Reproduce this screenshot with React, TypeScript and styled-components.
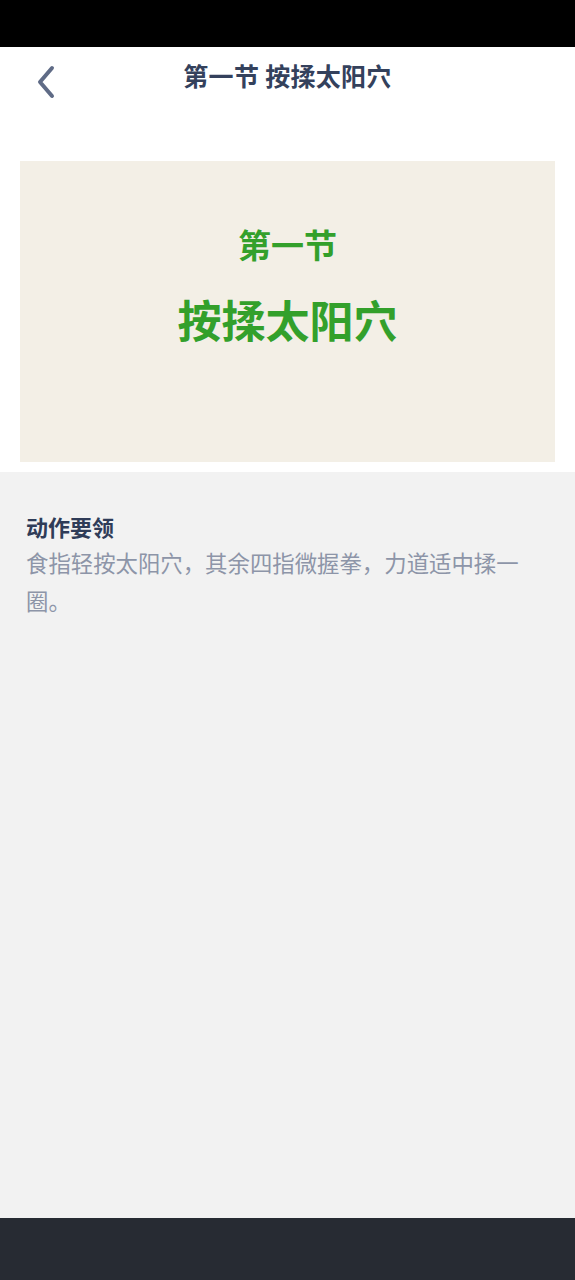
import React from "react";
import styled, { createGlobalStyle } from "styled-components";

const GlobalStyle = createGlobalStyle`
  html, body {
    margin: 0;
    padding: 0;
    background: #f2f2f2;
  }
  body {
    font-family: "Noto Sans CJK SC", "Noto Sans", sans-serif;
  }
  * {
    box-sizing: border-box;
  }
`;

const Page = styled.div`
  width: 575px;
  height: 1280px;
  display: flex;
  flex-direction: column;
  background: #f2f2f2;
  overflow: hidden;
`;

const StatusBar = styled.div`
  height: 47px;
  flex: none;
  background: #000;
`;

const Header = styled.div`
  flex: none;
  background: #fff;
  padding-bottom: 10px;
`;

const NavBar = styled.div`
  height: 62px;
  display: flex;
  align-items: center;
  justify-content: center;
  position: relative;
`;

const BackButton = styled.button`
  position: absolute;
  left: 31px;
  top: 17px;
  width: 30px;
  height: 36px;
  padding: 0;
  border: none;
  background: none;
  display: flex;
  align-items: center;
  justify-content: center;
`;

const Title = styled.h1`
  margin: 0 0 7px;
  font-size: 25px;
  font-weight: 700;
  color: #34415c;
  letter-spacing: 0.3px;
`;

const Banner = styled.div`
  margin: 52px 20px 0;
  height: 301px;
  background: #f3efe6;
  display: flex;
  flex-direction: column;
  align-items: center;
  justify-content: center;
  padding-bottom: 52px;
`;

const BannerLine = styled.div<{ $size: number; $gap?: number }>`
  font-size: ${(p) => p.$size}px;
  line-height: 1.2;
  font-weight: 700;
  color: #33a02b;
  margin-top: ${(p) => p.$gap ?? 0}px;
`;

const Body = styled.div`
  flex: 1;
  padding: 37px 39px 0 26px;
`;

const SectionTitle = styled.h2`
  margin: 0;
  font-size: 22px;
  line-height: 34px;
  font-weight: 700;
  color: #2f3c58;
`;

const SectionText = styled.p`
  margin: 0;
  font-size: 22.4px;
  line-height: 38px;
  color: #8d95a8;
`;

const BottomBar = styled.div`
  height: 62px;
  flex: none;
  background: #272b33;
`;

const App: React.FC = () => {
  return (
    <>
      <GlobalStyle />
      <Page>
        <StatusBar />
        <Header>
          <NavBar>
            <BackButton aria-label="返回">
              <svg width="22" height="34" viewBox="0 0 22 34">
                <path
                  d="M17 3 L5 17 L17 31"
                  fill="none"
                  stroke="#5f6b86"
                  strokeWidth="4"
                  strokeLinecap="round"
                  strokeLinejoin="round"
                />
              </svg>
            </BackButton>
            <Title>第一节 按揉太阳穴</Title>
          </NavBar>
          <Banner>
            <BannerLine $size={33}>第一节</BannerLine>
            <BannerLine $size={44} $gap={29}>按揉太阳穴</BannerLine>
          </Banner>
        </Header>
        <Body>
          <SectionTitle>动作要领</SectionTitle>
          <SectionText>食指轻按太阳穴，其余四指微握拳，力道适中揉一圈。</SectionText>
        </Body>
        <BottomBar />
      </Page>
    </>
  );
};

export default App;
